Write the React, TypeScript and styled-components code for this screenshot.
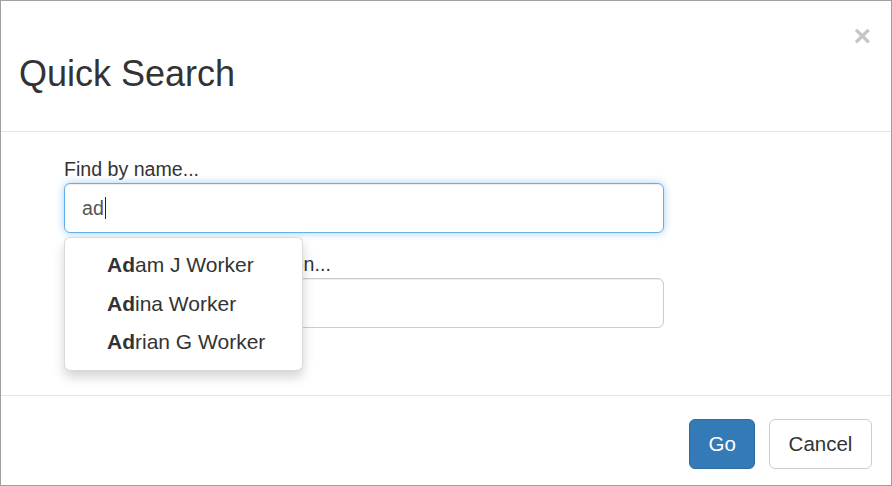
import React from 'react';
import styled, { createGlobalStyle } from 'styled-components';

const GlobalStyle = createGlobalStyle`
  html, body {
    margin: 0;
    padding: 0;
    background: #fff;
  }
  body {
    font-family: "Liberation Sans", Arial, Helvetica, sans-serif;
    color: #333;
  }
  * {
    box-sizing: border-box;
  }
`;

const suggestions = [
  { match: 'Ad', rest: 'am J Worker' },
  { match: 'Ad', rest: 'ina Worker' },
  { match: 'Ad', rest: 'rian G Worker' },
];

export default function App() {
  return (
    <>
      <GlobalStyle />
      <Dialog>
        <Header>
          <Title>Quick Search</Title>
          <CloseButton aria-label="Close">×</CloseButton>
        </Header>
        <Body>
          <FormGroup>
            <Label>Find by name...</Label>
            <Field>
              <SearchInput $focused>
                <Typed>ad</Typed>
                <Caret />
              </SearchInput>
              <Menu>
                {suggestions.map((s) => (
                  <MenuItem key={s.rest}>
                    <strong>{s.match}</strong>
                    {s.rest}
                  </MenuItem>
                ))}
              </Menu>
            </Field>
          </FormGroup>
          <FormGroup>
            <Label>Find by employee or location...</Label>
            <Field>
              <SearchInput />
            </Field>
          </FormGroup>
        </Body>
        <Footer>
          <Button $primary>Go</Button>
          <Button>Cancel</Button>
        </Footer>
      </Dialog>
    </>
  );
}

const Dialog = styled.div`
  width: 892px;
  height: 486px;
  border: 1px solid #a0a0a0;
  background: #fff;
  display: flex;
  flex-direction: column;
  position: relative;
  overflow: hidden;
`;

const Header = styled.div`
  position: relative;
  padding: 53px 20px 37px 18px;
  border-bottom: 1px solid #e5e5e5;
`;

const Title = styled.h4`
  margin: 0;
  font-size: 36px;
  font-weight: 400;
  line-height: 40px;
  color: #333;
`;

const CloseButton = styled.button`
  position: absolute;
  top: 17px;
  right: 20px;
  padding: 0;
  border: 0;
  background: transparent;
  font-family: "Liberation Sans", Arial, sans-serif;
  font-size: 30px;
  font-weight: 700;
  line-height: 36px;
  color: #000;
  opacity: 0.22;
  cursor: pointer;
`;

const Body = styled.div`
  padding: 23px 63px 67px 63px;
  display: flex;
  flex-direction: column;
  gap: 17px;
`;

const FormGroup = styled.div`
  width: 600px;
  display: flex;
  flex-direction: column;
`;

const Label = styled.label`
  font-size: 19.6px;
  line-height: 28px;
  color: #333;
`;

const Field = styled.div`
  position: relative;
`;

const SearchInput = styled.div<{ $focused?: boolean }>`
  height: 50px;
  display: flex;
  align-items: center;
  padding: 0 17px;
  font-size: 19.6px;
  color: #555;
  background: #fff;
  border: 1px solid ${({ $focused }) => ($focused ? '#66afe9' : '#ccc')};
  border-radius: 6px;
  box-shadow: ${({ $focused }) =>
    $focused
      ? 'inset 0 1px 1px rgba(0,0,0,.075), 0 0 9px rgba(102,175,233,.6)'
      : 'inset 0 1px 1px rgba(0,0,0,.075)'};
`;

const Typed = styled.span`
  line-height: 24px;
`;

const Caret = styled.span`
  width: 1px;
  height: 22px;
  margin-left: 1px;
  background: #222;
`;

const Menu = styled.ul`
  position: absolute;
  top: calc(100% + 4px);
  left: 0;
  z-index: 10;
  width: 239px;
  margin: 0;
  padding: 8px 0;
  list-style: none;
  background: #fff;
  border: 1px solid rgba(0, 0, 0, 0.15);
  border-radius: 6px;
  box-shadow: 0 6px 12px rgba(0, 0, 0, 0.175);
`;

const MenuItem = styled.li`
  padding: 0 20px 0 42px;
  font-size: 21px;
  line-height: 38.5px;
  color: #333;
  white-space: nowrap;

  strong {
    font-weight: 700;
  }
`;

const Footer = styled.div`
  border-top: 1px solid #e5e5e5;
  padding: 23px 19px 0 0;
  display: flex;
  justify-content: flex-end;
  gap: 13.6px;
`;

const Button = styled.button<{ $primary?: boolean }>`
  height: 50px;
  padding: 0 18.6px;
  font-family: "Liberation Sans", Arial, sans-serif;
  font-size: 20.5px;
  line-height: 48px;
  border-radius: 6px;
  border: 1px solid ${({ $primary }) => ($primary ? '#2e6da4' : '#ccc')};
  background: ${({ $primary }) => ($primary ? '#337ab7' : '#fff')};
  color: ${({ $primary }) => ($primary ? '#fff' : '#333')};
  cursor: pointer;
`;
